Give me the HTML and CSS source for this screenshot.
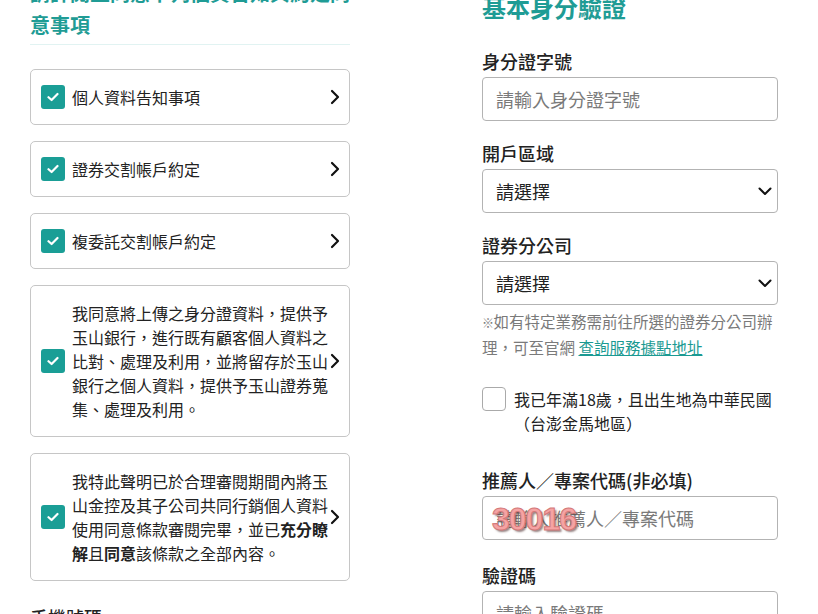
FILE: index.html
```html
<!DOCTYPE html>
<html lang="zh-Hant">
<head>
<meta charset="utf-8">
<title>開戶</title>
<link rel="stylesheet" href="styles.css">
</head>
<body>
<div class="page">
  <section class="left">
    <h2 class="agree-title">請詳閱並同意下列個資告知與約定同意事項</h2>
    <div class="cards">
      <div class="card">
        <span class="check"><svg width="12" height="10" viewBox="0 0 12 10"><path d="M1.5 5.2 L4.6 8 L10.5 2" fill="none" stroke="#fff" stroke-width="2.2" stroke-linecap="round" stroke-linejoin="round"/></svg></span>
        <div class="card-text">個人資料告知事項</div>
        <svg class="chev" width="10" height="16" viewBox="0 0 10 16"><path d="M2 2 L8 8 L2 14" fill="none" stroke="#111" stroke-width="2.2" stroke-linecap="round" stroke-linejoin="round"/></svg>
      </div>
      <div class="card">
        <span class="check"><svg width="12" height="10" viewBox="0 0 12 10"><path d="M1.5 5.2 L4.6 8 L10.5 2" fill="none" stroke="#fff" stroke-width="2.2" stroke-linecap="round" stroke-linejoin="round"/></svg></span>
        <div class="card-text">證券交割帳戶約定</div>
        <svg class="chev" width="10" height="16" viewBox="0 0 10 16"><path d="M2 2 L8 8 L2 14" fill="none" stroke="#111" stroke-width="2.2" stroke-linecap="round" stroke-linejoin="round"/></svg>
      </div>
      <div class="card">
        <span class="check"><svg width="12" height="10" viewBox="0 0 12 10"><path d="M1.5 5.2 L4.6 8 L10.5 2" fill="none" stroke="#fff" stroke-width="2.2" stroke-linecap="round" stroke-linejoin="round"/></svg></span>
        <div class="card-text">複委託交割帳戶約定</div>
        <svg class="chev" width="10" height="16" viewBox="0 0 10 16"><path d="M2 2 L8 8 L2 14" fill="none" stroke="#111" stroke-width="2.2" stroke-linecap="round" stroke-linejoin="round"/></svg>
      </div>
      <div class="card">
        <span class="check"><svg width="12" height="10" viewBox="0 0 12 10"><path d="M1.5 5.2 L4.6 8 L10.5 2" fill="none" stroke="#fff" stroke-width="2.2" stroke-linecap="round" stroke-linejoin="round"/></svg></span>
        <div class="card-text">我同意將上傳之身分證資料，提供予玉山銀行，進行既有顧客個人資料之比對、處理及利用，並將留存於玉山銀行之個人資料，提供予玉山證券蒐集、處理及利用。</div>
        <svg class="chev" width="10" height="16" viewBox="0 0 10 16"><path d="M2 2 L8 8 L2 14" fill="none" stroke="#111" stroke-width="2.2" stroke-linecap="round" stroke-linejoin="round"/></svg>
      </div>
      <div class="card">
        <span class="check"><svg width="12" height="10" viewBox="0 0 12 10"><path d="M1.5 5.2 L4.6 8 L10.5 2" fill="none" stroke="#fff" stroke-width="2.2" stroke-linecap="round" stroke-linejoin="round"/></svg></span>
        <div class="card-text">我特此聲明已於合理審閱期間內將玉山金控及其子公司共同行銷個人資料使用同意條款審閱完畢，並已<b>充分瞭解</b>且<b>同意</b>該條款之全部內容。</div>
        <svg class="chev" width="10" height="16" viewBox="0 0 10 16"><path d="M2 2 L8 8 L2 14" fill="none" stroke="#111" stroke-width="2.2" stroke-linecap="round" stroke-linejoin="round"/></svg>
      </div>
    </div>
    <div class="field-label phone-label">手機號碼</div>
  </section>

  <section class="right">
    <h2 class="id-title">基本身分驗證</h2>

    <div class="field">
      <div class="field-label">身分證字號</div>
      <div class="input placeholder">請輸入身分證字號</div>
    </div>

    <div class="field">
      <div class="field-label">開戶區域</div>
      <div class="input select"><span>請選擇</span>
        <svg width="14" height="9" viewBox="0 0 14 9"><path d="M1.5 1.5 L7 7 L12.5 1.5" fill="none" stroke="#111" stroke-width="2" stroke-linecap="round" stroke-linejoin="round"/></svg>
      </div>
    </div>

    <div class="field">
      <div class="field-label">證券分公司</div>
      <div class="input select"><span>請選擇</span>
        <svg width="14" height="9" viewBox="0 0 14 9"><path d="M1.5 1.5 L7 7 L12.5 1.5" fill="none" stroke="#111" stroke-width="2" stroke-linecap="round" stroke-linejoin="round"/></svg>
      </div>
    </div>

    <p class="note"><span class="mark">※</span>如有特定業務需前往所選的證券分公司辦理，可至官網 <a class="link" href="#">查詢服務據點地址</a></p>

    <label class="age-row">
      <span class="box"></span>
      <span class="age-text">我已年滿18歲，且出生地為中華民國（台澎金馬地區）</span>
    </label>

    <div class="field referrer">
      <div class="field-label">推薦人／專案代碼(非必填)</div>
      <div class="input placeholder code-input">請輸入推薦人／專案代碼<span class="stamp">30016</span></div>
    </div>

    <div class="field captcha">
      <div class="field-label">驗證碼</div>
      <div class="input placeholder">請輸入驗證碼</div>
    </div>
  </section>
</div>
</body>
</html>
```

FILE: styles.css
```css
html, body {
  margin: 0;
  padding: 0;
  background: #fff;
}

body {
  font-family: "Noto Sans CJK TC", "Noto Sans", sans-serif;
  color: #222;
  overflow: hidden;
}

.page {
  display: grid;
  grid-template-columns: 320px 296px;
  column-gap: 132px;
  padding-left: 30px;
  margin-top: -23px;
  align-items: start;
}

/* left column */
.agree-title {
  margin: 0;
  font-size: 20px;
  font-weight: 700;
  line-height: 32px;
  color: #1f9c95;
  padding-bottom: 3px;
  border-bottom: 1px solid #e1f3f2;
}

.cards {
  margin-top: 24px;
  display: flex;
  flex-direction: column;
  gap: 16px;
}

.card {
  display: flex;
  align-items: center;
  border: 1px solid #c6c6c6;
  border-radius: 5px;
  padding: 15px 9px 15px 10px;
}

.check {
  flex: none;
  width: 24px;
  height: 24px;
  border-radius: 3px;
  background: #1a9e96;
  display: flex;
  align-items: center;
  justify-content: center;
  margin-right: 7px;
}

.card-text {
  flex: 1;
  font-size: 16px;
  line-height: 24px;
  color: #222;
}

.card-text b {
  font-weight: 700;
}

.chev {
  flex: none;
  margin-left: 1px;
}

.phone-label {
  margin-top: 23px;
}

/* right column */
.right {
  padding-top: 14px;
}

.id-title {
  margin: 0 0 25px;
  font-size: 24px;
  font-weight: 700;
  line-height: 32px;
  color: #1f9c95;
}

.field + .field {
  margin-top: 19px;
}

.field-label {
  font-size: 18px;
  font-weight: 500;
  line-height: 26px;
  margin-bottom: 3px;
  color: #222;
}

.input {
  box-sizing: border-box;
  height: 44px;
  border: 1px solid #b3b3b3;
  border-radius: 4px;
  padding: 0 13px;
  display: flex;
  align-items: center;
  font-size: 18px;
  color: #222;
  background: #fff;
}

.placeholder {
  color: #7a7a7a;
}

.select {
  justify-content: space-between;
  padding-right: 5px;
}

.note {
  margin: 4px 0 0;
  font-size: 15.5px;
  line-height: 24px;
  color: #7a7a7a;
}

.mark {
  font-size: 12px;
  letter-spacing: -0.5px;
}

.link {
  color: #1a9a92;
  text-decoration: underline;
}

.age-row {
  display: flex;
  align-items: flex-start;
  margin-top: 28px;
}

.box {
  flex: none;
  box-sizing: border-box;
  width: 24px;
  height: 24px;
  border: 1px solid #aaa;
  border-radius: 4px;
  margin-right: 8px;
}

.age-text {
  font-size: 16px;
  line-height: 24px;
  color: #222;
}

.referrer {
  margin-top: 32px;
}

.field.captcha {
  margin-top: 22px;
}

.code-input {
  position: relative;
}

.stamp {
  position: absolute;
  left: 9px;
  top: 4px;
  font-family: "Liberation Sans", "DejaVu Sans", sans-serif;
  font-weight: 700;
  font-size: 32px;
  line-height: 36px;
  letter-spacing: -1px;
  color: #f5a3a3;
  -webkit-text-stroke: 1px #d47878;
  text-shadow: 2px 2px 2px rgba(80, 50, 50, 0.6);
}
```
